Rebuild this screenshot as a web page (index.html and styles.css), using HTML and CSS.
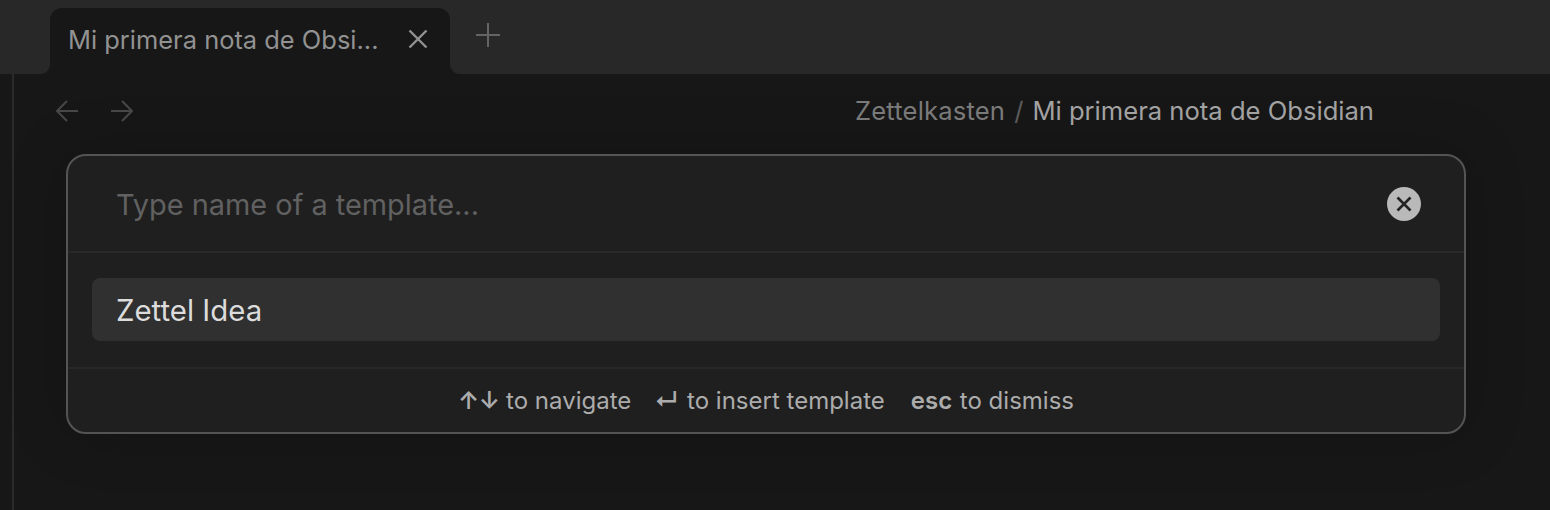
FILE: index.html
```html
<!DOCTYPE html>
<html lang="es">
<head>
<meta charset="utf-8">
<title>Obsidian</title>
<link rel="stylesheet" href="styles.css">
</head>
<body>
<div class="tabbar">
  <div class="tab">
    <span class="tab-title">Mi primera nota de Obsi...</span>
    <svg class="tab-close" width="24" height="24" viewBox="0 0 24 24"><path d="M3.500 3.500 20.500 20.500M20.500 3.500 3.500 20.500"/></svg>
  </div>
  <svg class="tab-new" width="26" height="26" viewBox="0 0 26 26"><path d="M13 1V25M1 13H25"/></svg>
</div>
<div class="workspace">
  <div class="rail"></div>
  <main class="pane">
    <div class="nav">
      <div class="nav-arrows">
        <svg class="arrow" width="22" height="22" viewBox="0 0 22 22"><path d="M22 11H1.500M11 1 1 11l10 10"/></svg>
        <svg class="arrow" width="22" height="22" viewBox="0 0 22 22"><path d="M0 11H20.500M11 1 21 11 11 21"/></svg>
      </div>
      <div class="crumbs"><span class="crumb-parent">Zettelkasten</span><span class="crumb-sep">/</span><span class="crumb-current">Mi primera nota de Obsidian</span></div>
    </div>
    <section class="modal">
      <div class="search">
        <span class="placeholder">Type name of a template...</span>
        <span class="clear"><svg width="18" height="18" viewBox="0 0 18 18"><path d="M2.500 2.500 15.500 15.500M15.500 2.500 2.500 15.500"/></svg></span>
      </div>
      <div class="results"><div class="item"><span class="item-label">Zettel Idea</span></div></div>
      <div class="hints">
        <span class="hint"><b class="sym sym-pair">↑↓</b> to navigate</span>
        <span class="hint hint-enter"><b class="sym sym-enter">↵</b> to insert template</span>
        <span class="hint hint-esc"><b class="key">esc</b> to dismiss</span>
      </div>
    </section>
  </main>
</div>
</body>
</html>
```
FILE: styles.css
```css
* { box-sizing: border-box; }
html, body { margin: 0; height: 510px; overflow: hidden; }
body { background: #171717; font-family: Inter, "Noto Sans", sans-serif; }
.tabbar { height: 74px; background: #282828; padding: 8px 0 0 50px; display: flex; align-items: flex-start; }
.tab { position: relative; width: 400px; height: 66px; background: #171717; border-radius: 12px 12px 0 0; padding: 0 20px 0 18px; display: flex; align-items: center; justify-content: space-between; }
.tab::before, .tab::after { content: ""; position: absolute; bottom: 0; width: 10px; height: 10px; background: radial-gradient(circle at var(--cx) 0, #282828 9.500px, #171717 10.500px); }
.tab::before { --cx: 0; left: -10px; }
.tab::after { --cx: 100%; right: -10px; }
.tab-title { font-size: 25.450px; color: #929292; padding-bottom: 4px; white-space: nowrap; }
.tab-close { fill: none; stroke: #929292; stroke-width: 2.400; margin-bottom: 4px; flex: none; }
.tab-new { fill: none; stroke: #646464; stroke-width: 2; margin: 14px 0 0 25px; }
.workspace { display: flex; height: 436px; }
.rail { width: 14px; flex: none; border-right: 2px solid #2b2b2b; }
.pane { flex: 1; padding: 0 0 0 52px; }
.nav { height: 80px; display: flex; align-items: flex-start; justify-content: space-between; padding: 26px 176px 0 0; margin-left: -10px; }
.nav-arrows { display: flex; gap: 33px; }
.arrow { fill: none; stroke: #474747; stroke-width: 2; }
.crumbs { font-size: 25.600px; line-height: 22px; display: flex; gap: 9px; white-space: nowrap; }
.crumb-parent { color: #7a7a7a; letter-spacing: .17px; }
.crumb-sep { color: #5b5b5b; }
.crumb-current { color: #a2a2a2; }
.modal { width: 1400px; height: 280px; background: #1f1f1f; border: 2px solid #545454; border-radius: 20px; box-shadow: 0 0 60px rgba(0,0,0,.2); display: flex; flex-direction: column; }
.search { height: 97px; flex: none; border-bottom: 2px solid #282828; padding: 0 43px 0 48px; display: flex; align-items: center; justify-content: space-between; }
.placeholder { font-size: 28.900px; color: #616161; line-height: 1; margin-top: 4px; }
.clear { width: 34px; height: 34px; border-radius: 50%; background: #b9b9b9; display: flex; align-items: center; justify-content: center; margin-top: 1px; }
.clear svg { fill: none; stroke: #222; stroke-width: 2.600; }
.results { flex: none; height: 116px; padding: 25px 24px; border-bottom: 2px solid #282828; }
.item { height: 63px; background: #303030; border-radius: 8px; padding: 0 24px; display: flex; align-items: center; font-size: 29.400px; color: #dcdcdc; }
.item-label { margin-top: 2px; }
.hints { flex: 1; display: flex; justify-content: center; align-items: center; gap: 25px; font-size: 24px; color: #acacac; }
.hint { white-space: nowrap; }
.hint b { font-weight: 600; }
.sym-pair { letter-spacing: -.5px; }
.hint-enter { margin-left: -2px; }
.hint-esc { margin-left: 1px; }
.key { margin-right: 1px; }
.sym-enter { margin-right: 2px; }
```
